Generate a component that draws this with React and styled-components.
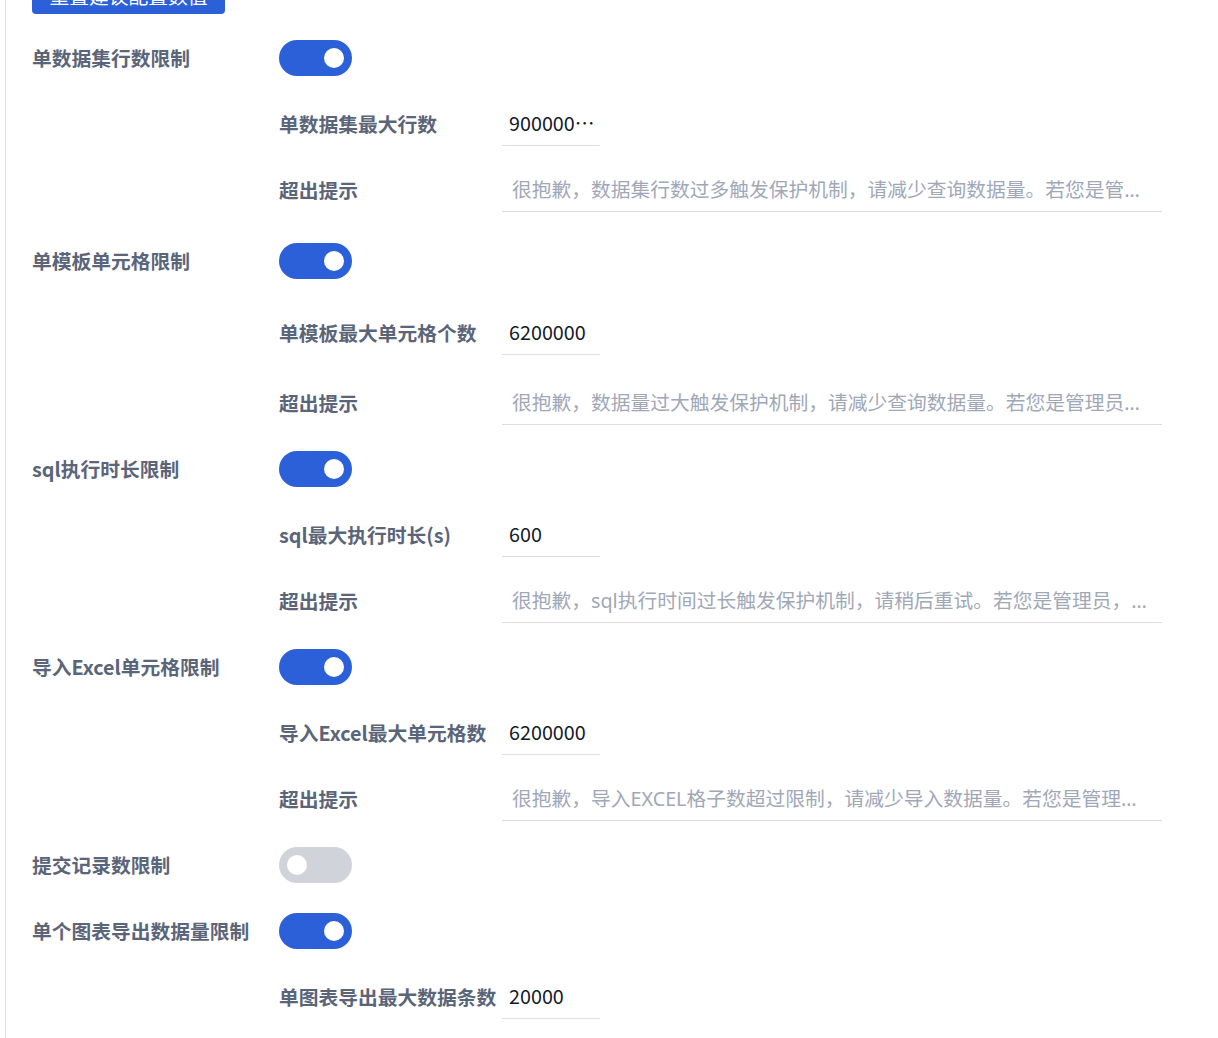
import React, { useState } from 'react';
import styled, { createGlobalStyle } from 'styled-components';

const GlobalStyle = createGlobalStyle`
  html, body {
    margin: 0;
    padding: 0;
    background: #ffffff;
    overflow: hidden;
  }
  body {
    font-family: "Noto Sans CJK SC", "Noto Sans", sans-serif;
  }
`;

const Page = styled.div`
  margin-left: 5px;
  min-height: 100vh;
  border-left: 1px solid #dcdfe6;
  padding-left: 26px;
  box-sizing: border-box;
`;

const PrimaryButton = styled.button`
  display: block;
  height: 38px;
  width: 193px;
  margin-top: -24px;
  margin-bottom: 24px;
  padding: 0;
  border: none;
  border-radius: 4px;
  background: #2b60d9;
  color: #ffffff;
  font-family: "Noto Sans CJK SC", sans-serif;
  font-size: 19.75px;
  cursor: pointer;
`;

const Form = styled.div`
  display: flex;
  flex-direction: column;
`;

const Item = styled.div`
  display: flex;
  align-items: center;
  height: 40px;
  margin-top: ${({ $extra }) => $extra || 0}px;
  margin-bottom: 26px;
  padding-left: ${({ $sub }) => ($sub ? 247 : 0)}px;
`;

const Label = styled.div`
  flex: none;
  width: ${({ $sub }) => ($sub ? 223 : 247)}px;
  font-family: "Noto Sans CJK SC", sans-serif;
  font-weight: 700;
  font-size: 19.75px;
  line-height: 40px;
  color: #5b6579;
  white-space: nowrap;
`;

const Switch = styled.button`
  position: relative;
  width: 73px;
  height: 36px;
  padding: 0;
  border: none;
  border-radius: 18px;
  background: ${({ $on }) => ($on ? '#2b60d9' : '#d0d3d9')};
  cursor: pointer;

  &::after {
    content: '';
    position: absolute;
    top: 8px;
    left: ${({ $on }) => ($on ? 45 : 8)}px;
    width: 20px;
    height: 20px;
    border-radius: 50%;
    background: #ffffff;
  }
`;

const Field = styled.input`
  box-sizing: border-box;
  width: ${({ $wide }) => ($wide ? 660 : 98)}px;
  height: 42px;
  margin-top: 2px;
  padding: 0 ${({ $wide }) => ($wide ? 14 : 4)}px 4px ${({ $wide }) => ($wide ? 10 : 7)}px;
  border: none;
  border-bottom: 1px solid #dcdfe6;
  outline: none;
  background: transparent;
  font-family: "Noto Sans CJK SC", sans-serif;
  font-size: 19.75px;
  color: #131a2b;
  text-overflow: ellipsis;

  &::placeholder {
    font-family: "Noto Sans", "Noto Sans CJK SC", sans-serif;
    color: #a0a8b8;
  }
`;

const groups = [
  {
    label: '单数据集行数限制',
    on: true,
    fields: [
      { label: '单数据集最大行数', value: '900000000' },
      { label: '超出提示', tip: '很抱歉，数据集行数过多触发保护机制，请减少查询数据量。若您是管理员，可前往系统设置调整限制。' },
    ],
  },
  {
    label: '单模板单元格限制',
    on: true,
    extra: 5,
    fields: [
      { label: '单模板最大单元格个数', value: '6200000', extra: 6 },
      { label: '超出提示', extra: 4, tip: '很抱歉，数据量过大触发保护机制，请减少查询数据量。若您是管理员，可前往系统设置调整限制。' },
    ],
  },
  {
    label: 'sql执行时长限制',
    on: true,
    fields: [
      { label: 'sql最大执行时长(s)', value: '600' },
      { label: '超出提示', tip: '很抱歉，sql执行时间过长触发保护机制，请稍后重试。若您是管理员，可前往系统设置调整限制。' },
    ],
  },
  {
    label: '导入Excel单元格限制',
    on: true,
    fields: [
      { label: '导入Excel最大单元格数', value: '6200000' },
      { label: '超出提示', tip: '很抱歉，导入EXCEL格子数超过限制，请减少导入数据量。若您是管理员，可前往系统设置调整限制。' },
    ],
  },
  {
    label: '提交记录数限制',
    on: false,
    fields: [],
  },
  {
    label: '单个图表导出数据量限制',
    on: true,
    fields: [{ label: '单图表导出最大数据条数', value: '20000' }],
  },
];

export default function App() {
  const [state, setState] = useState(groups.map((g) => g.on));

  const toggle = (i) => setState((s) => s.map((v, j) => (j === i ? !v : v)));

  return (
    <>
      <GlobalStyle />
      <Page>
        <PrimaryButton type="button">重置建议配置数值</PrimaryButton>
        <Form>
          {groups.map((g, i) => (
            <React.Fragment key={g.label}>
              <Item $extra={g.extra}>
                <Label>{g.label}</Label>
                <Switch type="button" $on={state[i]} onClick={() => toggle(i)} />
              </Item>
              {state[i] &&
                g.fields.map((f) => (
                  <Item $sub $extra={f.extra} key={f.label}>
                    <Label $sub>{f.label}</Label>
                    {f.tip ? (
                      <Field $wide readOnly placeholder={f.tip} />
                    ) : (
                      <Field readOnly defaultValue={f.value} />
                    )}
                  </Item>
                ))}
            </React.Fragment>
          ))}
        </Form>
      </Page>
    </>
  );
}
